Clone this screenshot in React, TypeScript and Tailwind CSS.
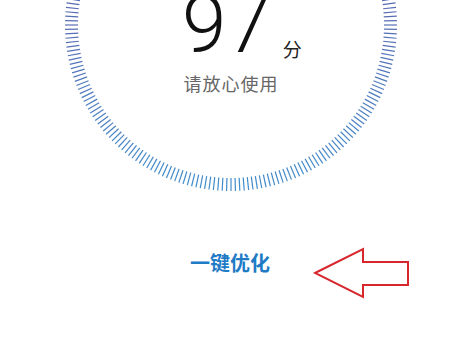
import React from 'react';

const TICKS = 236;

const Dial = () => {
  const c = 167;
  const r1 = 153;
  const r2 = 166;
  const lines = Array.from({ length: TICKS }, (_, i) => {
    const a = (i / TICKS) * Math.PI * 2;
    const cos = Math.cos(a);
    const sin = Math.sin(a);
    return (
      <line
        key={i}
        x1={c + cos * r1}
        y1={c + sin * r1}
        x2={c + cos * r2}
        y2={c + sin * r2}
      />
    );
  });
  return (
    <svg className="absolute inset-0" width="334" height="334" viewBox="0 0 334 334">
      <defs>
        <linearGradient id="tick" x1="0" y1="140" x2="0" y2="334" gradientUnits="userSpaceOnUse">
          <stop offset="0" stopColor="#5a69b2" />
          <stop offset="1" stopColor="#3f8dcb" />
        </linearGradient>
      </defs>
      <g stroke="url(#tick)" strokeWidth="1.2" strokeLinecap="butt">
        {lines}
      </g>
    </svg>
  );
};

const Arrow = () => (
  <svg width="98" height="54" viewBox="0 0 98 54" fill="none">
    <path
      d="M2 26 L50 2 L50 15 L95 15 L95 38 L50 38 L50 50 Z"
      stroke="#d8262d"
      strokeWidth="2"
      strokeLinejoin="miter"
    />
  </svg>
);

export default function App() {
  return (
    <div className="w-[453px] h-[351px] overflow-hidden bg-white font-['Noto_Sans_CJK_SC',sans-serif]">
      {/* score dial, top part is cut off */}
      <div className="relative w-[334px] h-[334px] -mt-[142px] ml-[64px]">
        <Dial />
        <div className="relative flex flex-col items-center pt-[127px]">
          <div className="flex items-end pl-[22px]">
            <span className="font-['Roboto',sans-serif] font-light text-[80px] leading-[80px] text-[#111]">
              97
            </span>
            <span className="ml-[12px] mb-[6px] text-[19px] leading-[20px] text-[#222]">分</span>
          </div>
          <div className="mt-[6px] text-[18px] leading-[24px] text-[#666] tracking-[1px]">请放心使用</div>
        </div>
      </div>

      {/* one-tap optimize */}
      <div className="flex items-start mt-[55px] pl-[190px]">
        <span className="mt-[4px] text-[20px] leading-[24px] font-bold text-[#1f7bc6]">
          一键优化
        </span>
        <div className="ml-[43px]">
          <Arrow />
        </div>
      </div>
    </div>
  );
}
